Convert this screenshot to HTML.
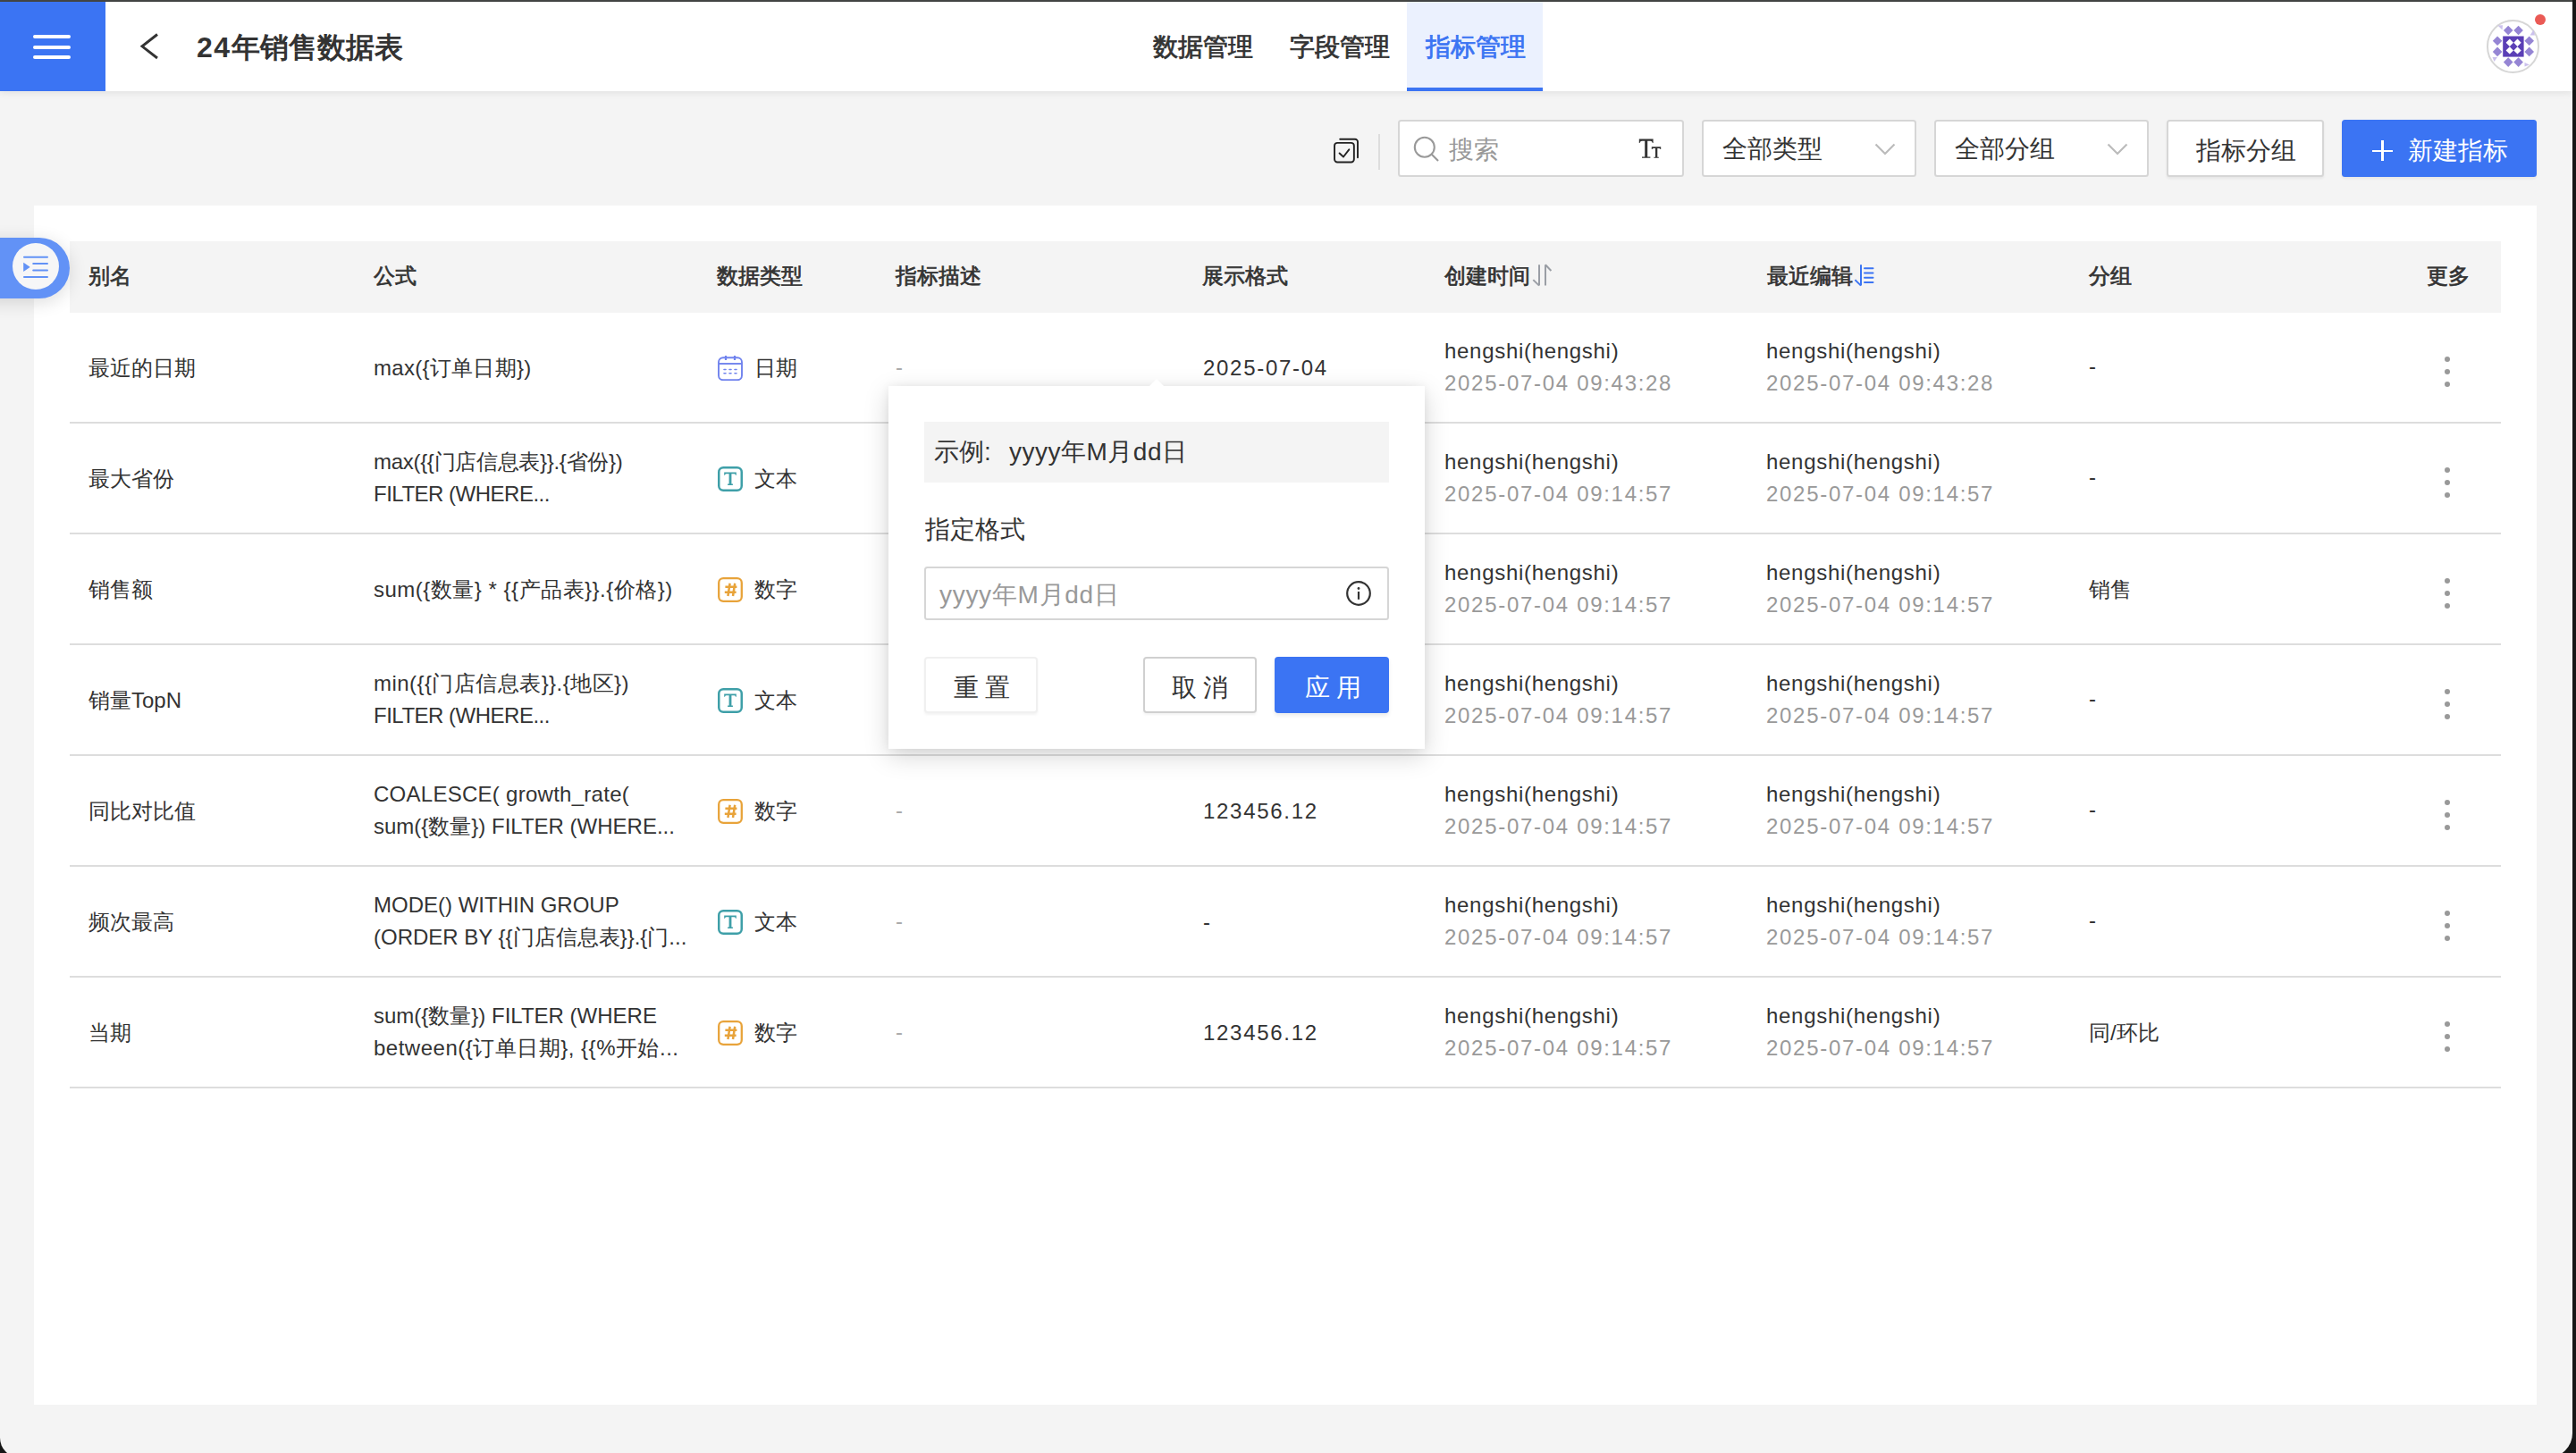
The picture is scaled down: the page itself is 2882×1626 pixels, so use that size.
<!DOCTYPE html><html><head><meta charset="utf-8"><style>
*{box-sizing:border-box}
html,body{margin:0;padding:0}
body{width:2882px;height:1626px;position:relative;overflow:hidden;background:#161616;font-family:"Liberation Sans",sans-serif;color:#333333}
.a{position:absolute}
.t{position:absolute;white-space:nowrap;line-height:1}
.r{position:absolute;white-space:nowrap;line-height:36px;font-size:24px}
</style></head><body>
<div class="a" style="left:0;top:0;width:2882px;height:2px;background:#444645"></div>
<div class="a" style="left:0;top:2px;width:2878px;height:1629px;background:#f4f4f4;border-bottom-left-radius:22px;border-bottom-right-radius:27px;overflow:hidden"></div>
<div class="a" style="left:0;top:2px;width:2878px;height:100px;background:#fff;box-shadow:0 2px 8px rgba(0,0,0,0.08)"></div>
<div class="a" style="left:0;top:2px;width:118px;height:100px;background:#3b74f3"></div>
<div class="a" style="left:37px;top:39px;width:42px;height:4px;border-radius:2px;background:#fff"></div>
<div class="a" style="left:37px;top:50.5px;width:42px;height:4px;border-radius:2px;background:#fff"></div>
<div class="a" style="left:37px;top:62px;width:42px;height:4px;border-radius:2px;background:#fff"></div>
<svg class="a" style="left:150px;top:30px" width="40" height="44" viewBox="0 0 40 44"><path d="M26 8.5 L9 21.8 L26 35" fill="none" stroke="#333333" stroke-width="2.9"/></svg>
<div class="t" style="left:220px;top:37px;font-size:32px;font-weight:bold"><span style="letter-spacing:1.5px">24</span>年销售数据表</div>
<div class="a" style="left:1574px;top:2px;width:152px;height:100px;background:#ebf1fe"></div>
<div class="a" style="left:1574px;top:98px;width:152px;height:4px;background:#3b74f3"></div>
<div class="t" style="left:1290px;top:39px;font-size:28px;-webkit-text-stroke:0.8px #333">数据管理</div>
<div class="t" style="left:1443px;top:39px;font-size:28px;-webkit-text-stroke:0.8px #333">字段管理</div>
<div class="t" style="left:1595px;top:39px;font-size:28px;-webkit-text-stroke:0.8px #3b74f3;color:#3b74f3">指标管理</div>
<div class="a" style="left:2782px;top:22.2px;width:59.4px;height:59.4px;border-radius:50%;border:2px solid #d6d6d6;background:#fff"></div>
<svg class="a" style="left:2782px;top:22px" width="60" height="60" viewBox="0 0 60 60">
<g fill="#9585d4">
<path d="M24.2 6.7 l5.3 5.3 -5.3 5.3 -5.3 -5.3z"/><path d="M35.6 6.7 l5.3 5.3 -5.3 5.3 -5.3 -5.3z"/>
<path d="M24.2 42.3 l5.3 5.3 -5.3 5.3 -5.3 -5.3z"/><path d="M35.6 42.3 l5.3 5.3 -5.3 5.3 -5.3 -5.3z"/>
<path d="M12.1 18.5 l5.3 5.3 -5.3 5.3 -5.3 -5.3z"/><path d="M12.1 30.6 l5.3 5.3 -5.3 5.3 -5.3 -5.3z"/>
<path d="M47.7 18.5 l5.3 5.3 -5.3 5.3 -5.3 -5.3z"/><path d="M47.7 30.6 l5.3 5.3 -5.3 5.3 -5.3 -5.3z"/>
</g>
<g fill="#cbc1ec"><path d="M12.5 6.5 L18 6.2 L17.5 11.5z"/><path d="M52.5 11.5 L54 17.5 L48.5 17.5z"/><path d="M6.5 42 L12 42 L8.5 47z"/><path d="M42.5 48 L48 50.5 L42.5 52.5z"/></g>
<rect x="18.2" y="18.5" width="23.4" height="23.1" fill="#5b3fb6"/>
<g fill="#fff"><path d="M25.8 21.5 l4.2 4.2 -4.2 4.2 -4.2 -4.2z"/><path d="M34.5 21.5 l4.2 4.2 -4.2 4.2 -4.2 -4.2z"/><path d="M25.8 30.2 l4.2 4.2 -4.2 4.2 -4.2 -4.2z"/><path d="M34.5 30.2 l4.2 4.2 -4.2 4.2 -4.2 -4.2z"/></g>
</svg>
<div class="a" style="left:2836px;top:16px;width:12px;height:12px;border-radius:50%;background:#ea5a55"></div>
<svg class="a" style="left:1488px;top:150px" width="36" height="36" viewBox="0 0 36 36" fill="none" stroke="#222" stroke-width="1.9" stroke-linecap="round" stroke-linejoin="round">
<rect x="5.05" y="9.85" width="21.8" height="21.7" rx="3.2"/>
<path d="M11.2 5.7 H28 a3 3 0 0 1 3 3 V26.3"/>
<path d="M10.6 21.5 L15 25.5 L21.3 17.3"/></svg>
<div class="a" style="left:1542px;top:150px;width:2px;height:40px;background:#dddddd"></div>
<div class="a" style="left:1564px;top:134px;width:320px;height:64px;background:#fff;border:2px solid #d6d6d6;border-radius:3.5px;"></div>
<svg class="a" style="left:1578px;top:149px" width="36" height="36" viewBox="0 0 36 36" fill="none" stroke="#999999" stroke-width="2.1"><circle cx="15.8" cy="15.7" r="11"/><path d="M23.5 23.5 L31 31"/></svg>
<div class="t" style="left:1621px;top:154px;font-size:28px;color:#999999">搜索</div>
<svg class="a" style="left:1830px;top:150px" width="32" height="32" viewBox="0 0 32 32" fill="#333">
<path d="M3.8 5.6 H19.6 V10 l-0.7 0 Q18.2 7.8 16.4 7.8 H13.2 V25.6 H16.4 V26.8 H7 V25.6 H10.2 V7.8 H7 Q5.2 7.8 4.5 10 l-0.7 0z"/>
<path d="M17.8 14.3 H28.2 V17 l-0.6 0 Q27.2 15.9 26 15.9 H24.3 V25.8 H25.8 V26.8 H20.4 V25.8 H22 V15.9 H20 Q18.8 15.9 18.4 17 l-0.6 0z"/>
</svg>
<div class="a" style="left:1904px;top:134px;width:240px;height:64px;background:#fff;border:2px solid #d6d6d6;border-radius:3.5px;"></div>
<div class="t" style="left:1927px;top:153px;font-size:28px">全部类型</div>
<svg class="a" style="left:2096px;top:158px" width="26" height="18" viewBox="0 0 26 18" fill="none" stroke="#bbbbbb" stroke-width="2.2"><path d="M2.5 3.5 L13 14 L23.5 3.5"/></svg>
<div class="a" style="left:2164px;top:134px;width:240px;height:64px;background:#fff;border:2px solid #d6d6d6;border-radius:3.5px;"></div>
<div class="t" style="left:2187px;top:153px;font-size:28px">全部分组</div>
<svg class="a" style="left:2356px;top:158px" width="26" height="18" viewBox="0 0 26 18" fill="none" stroke="#bbbbbb" stroke-width="2.2"><path d="M2.5 3.5 L13 14 L23.5 3.5"/></svg>
<div class="a" style="left:2424px;top:134px;width:176px;height:64px;background:#fff;border:2px solid #d6d6d6;border-radius:3.5px;box-shadow:0 2px 3px rgba(0,0,0,0.06)"></div>
<div class="t" style="left:2457px;top:155px;font-size:28px">指标分组</div>
<div class="a" style="left:2620px;top:134px;width:218px;height:64px;background:#3b74f3;border-radius:3.5px;box-shadow:0 2px 3px rgba(0,0,0,0.06)"></div>
<div class="a" style="left:2654px;top:167.5px;width:23px;height:2.4px;background:#fff"></div>
<div class="a" style="left:2664.3px;top:157px;width:2.4px;height:23px;background:#fff"></div>
<div class="t" style="left:2694px;top:155px;font-size:28px;color:#fff">新建指标</div>
<div class="a" style="left:38px;top:230px;width:2800px;height:1342px;background:#fff"></div>
<div class="a" style="left:78px;top:270px;width:2720px;height:80px;background:#f4f4f4"></div>
<div class="t" style="left:99px;top:297px;font-size:24px;-webkit-text-stroke:0.7px #333333">别名</div>
<div class="t" style="left:418px;top:297px;font-size:24px;-webkit-text-stroke:0.7px #333333">公式</div>
<div class="t" style="left:802px;top:297px;font-size:24px;-webkit-text-stroke:0.7px #333333">数据类型</div>
<div class="t" style="left:1002px;top:297px;font-size:24px;-webkit-text-stroke:0.7px #333333">指标描述</div>
<div class="t" style="left:1344.5px;top:297px;font-size:24px;-webkit-text-stroke:0.7px #333333">展示格式</div>
<div class="t" style="left:1616px;top:297px;font-size:24px;-webkit-text-stroke:0.7px #333333">创建时间</div>
<div class="t" style="left:1976.5px;top:297px;font-size:24px;-webkit-text-stroke:0.7px #333333">最近编辑</div>
<div class="t" style="left:2336.5px;top:297px;font-size:24px;-webkit-text-stroke:0.7px #333333">分组</div>
<div class="t" style="left:2715px;top:297px;font-size:24px;-webkit-text-stroke:0.7px #333333">更多</div>
<svg class="a" style="left:1710px;top:292px" width="30" height="32" viewBox="0 0 30 32" fill="none" stroke="#9a9ea5" stroke-width="2"><path d="M12 4.2 V27.6 M5.3 21.1 L12 27.6 M19 27.6 V4.2 M19 4.2 L25.4 11"/></svg>
<svg class="a" style="left:2070px;top:292px" width="30" height="32" viewBox="0 0 30 32" fill="none" stroke="#3b74f3" stroke-width="2"><path d="M12 4.2 V27.6 M5.4 21.1 L12 27.6"/><path d="M16 8.3 H25.5 M16 13.6 H25.5 M16 18.8 H25.5 M16 24 H25.5" stroke-linecap="round"/></svg>
<div class="a" style="left:78px;top:472px;width:2720px;height:2px;background:#dddddd"></div>
<div class="r" style="left:99px;top:394px">最近的日期</div>
<div class="r" style="left:418px;top:394px"><span style="letter-spacing:0.3px">max({订单日期})</span></div>
<svg class="a" style="left:803px;top:398px" width="28" height="28" viewBox="0 0 28 28" fill="none" stroke="#7083ee" stroke-width="1.9">
<rect x="1" y="2.2" width="26" height="25" rx="5"/><path d="M1 9 H27"/><path d="M9 0 V5 M19 0 V5" stroke-width="2.2"/>
<g stroke-width="1.6" stroke-linecap="round"><path d="M7 15.5 h2 M13 15.5 h2 M19 15.5 h2 M7 19.7 h2 M13 19.7 h2 M19 19.7 h2"/></g></svg>
<div class="r" style="left:844px;top:394px">日期</div>
<div class="r" style="left:1002px;top:393px;color:#aaaaaa">-</div>
<div class="r" style="left:1346px;top:394px;letter-spacing:1.7px">2025-07-04</div>
<div class="r" style="left:1616px;top:375px"><span style="letter-spacing:0.7px">hengshi(hengshi)</span><br><span style="color:#999999;letter-spacing:1.7px">2025-07-04 09:43:28</span></div>
<div class="r" style="left:1976px;top:375px"><span style="letter-spacing:0.7px">hengshi(hengshi)</span><br><span style="color:#999999;letter-spacing:1.7px">2025-07-04 09:43:28</span></div>
<div class="r" style="left:2337px;top:392px">-</div>
<div class="a" style="left:2735px;top:399px;width:6px;height:6px;border-radius:50%;background:#999"></div>
<div class="a" style="left:2735px;top:413px;width:6px;height:6px;border-radius:50%;background:#999"></div>
<div class="a" style="left:2735px;top:426.6px;width:6px;height:6px;border-radius:50%;background:#999"></div>
<div class="a" style="left:78px;top:596px;width:2720px;height:2px;background:#dddddd"></div>
<div class="r" style="left:99px;top:518px">最大省份</div>
<div class="r" style="left:418px;top:499px"><span style="letter-spacing:-0.3px">max({{门店信息表}}.{省份})</span><br><span style="letter-spacing:-0.5px">FILTER (WHERE...</span></div>
<svg class="a" style="left:803px;top:522px" width="28" height="28" viewBox="0 0 28 28" fill="none">
<rect x="1.25" y="1.25" width="25.5" height="25.5" rx="5" stroke="#3e9fa8" stroke-width="2.5"/>
<path d="M7.2 6.6 H20.8 V9.7 H20 Q19.6 8.3 18.4 8.3 H15.4 V19.6 H16.9 V21 H11.1 V19.6 H12.6 V8.3 H9.6 Q8.4 8.3 8 9.7 H7.2z" fill="#3e9fa8"/></svg>
<div class="r" style="left:844px;top:518px">文本</div>
<div class="r" style="left:1002px;top:517px;color:#aaaaaa">-</div>
<div class="r" style="left:1346px;top:518px;letter-spacing:1.7px">-</div>
<div class="r" style="left:1616px;top:499px"><span style="letter-spacing:0.7px">hengshi(hengshi)</span><br><span style="color:#999999;letter-spacing:1.7px">2025-07-04 09:14:57</span></div>
<div class="r" style="left:1976px;top:499px"><span style="letter-spacing:0.7px">hengshi(hengshi)</span><br><span style="color:#999999;letter-spacing:1.7px">2025-07-04 09:14:57</span></div>
<div class="r" style="left:2337px;top:516px">-</div>
<div class="a" style="left:2735px;top:523px;width:6px;height:6px;border-radius:50%;background:#999"></div>
<div class="a" style="left:2735px;top:537px;width:6px;height:6px;border-radius:50%;background:#999"></div>
<div class="a" style="left:2735px;top:550.6px;width:6px;height:6px;border-radius:50%;background:#999"></div>
<div class="a" style="left:78px;top:720px;width:2720px;height:2px;background:#dddddd"></div>
<div class="r" style="left:99px;top:642px">销售额</div>
<div class="r" style="left:418px;top:642px"><span style="letter-spacing:0.5px">sum({数量} * {{产品表}}.{价格})</span></div>
<svg class="a" style="left:803px;top:646px" width="28" height="28" viewBox="0 0 28 28" fill="none">
<rect x="1.2" y="1.2" width="25.6" height="25.6" rx="5" stroke="#e8a33a" stroke-width="2.3"/>
<path d="M13.6 6.8 L11.4 21 M19.2 6.8 L17 21 M8.4 10.8 H21.4 M7.8 16.8 H20.6" stroke="#e8a33a" stroke-width="2.5"/></svg>
<div class="r" style="left:844px;top:642px">数字</div>
<div class="r" style="left:1002px;top:641px;color:#aaaaaa">-</div>
<div class="r" style="left:1346px;top:642px;letter-spacing:1.7px">123456.12</div>
<div class="r" style="left:1616px;top:623px"><span style="letter-spacing:0.7px">hengshi(hengshi)</span><br><span style="color:#999999;letter-spacing:1.7px">2025-07-04 09:14:57</span></div>
<div class="r" style="left:1976px;top:623px"><span style="letter-spacing:0.7px">hengshi(hengshi)</span><br><span style="color:#999999;letter-spacing:1.7px">2025-07-04 09:14:57</span></div>
<div class="r" style="left:2337px;top:642px">销售</div>
<div class="a" style="left:2735px;top:647px;width:6px;height:6px;border-radius:50%;background:#999"></div>
<div class="a" style="left:2735px;top:661px;width:6px;height:6px;border-radius:50%;background:#999"></div>
<div class="a" style="left:2735px;top:674.6px;width:6px;height:6px;border-radius:50%;background:#999"></div>
<div class="a" style="left:78px;top:844px;width:2720px;height:2px;background:#dddddd"></div>
<div class="r" style="left:99px;top:766px">销量TopN</div>
<div class="r" style="left:418px;top:747px"><span style="letter-spacing:0.45px">min({{门店信息表}}.{地区})</span><br><span style="letter-spacing:-0.5px">FILTER (WHERE...</span></div>
<svg class="a" style="left:803px;top:770px" width="28" height="28" viewBox="0 0 28 28" fill="none">
<rect x="1.25" y="1.25" width="25.5" height="25.5" rx="5" stroke="#3e9fa8" stroke-width="2.5"/>
<path d="M7.2 6.6 H20.8 V9.7 H20 Q19.6 8.3 18.4 8.3 H15.4 V19.6 H16.9 V21 H11.1 V19.6 H12.6 V8.3 H9.6 Q8.4 8.3 8 9.7 H7.2z" fill="#3e9fa8"/></svg>
<div class="r" style="left:844px;top:766px">文本</div>
<div class="r" style="left:1002px;top:765px;color:#aaaaaa">-</div>
<div class="r" style="left:1346px;top:766px;letter-spacing:1.7px">-</div>
<div class="r" style="left:1616px;top:747px"><span style="letter-spacing:0.7px">hengshi(hengshi)</span><br><span style="color:#999999;letter-spacing:1.7px">2025-07-04 09:14:57</span></div>
<div class="r" style="left:1976px;top:747px"><span style="letter-spacing:0.7px">hengshi(hengshi)</span><br><span style="color:#999999;letter-spacing:1.7px">2025-07-04 09:14:57</span></div>
<div class="r" style="left:2337px;top:764px">-</div>
<div class="a" style="left:2735px;top:771px;width:6px;height:6px;border-radius:50%;background:#999"></div>
<div class="a" style="left:2735px;top:785px;width:6px;height:6px;border-radius:50%;background:#999"></div>
<div class="a" style="left:2735px;top:798.6px;width:6px;height:6px;border-radius:50%;background:#999"></div>
<div class="a" style="left:78px;top:968px;width:2720px;height:2px;background:#dddddd"></div>
<div class="r" style="left:99px;top:890px">同比对比值</div>
<div class="r" style="left:418px;top:871px"><span style="letter-spacing:0.27px">COALESCE( growth_rate(</span><br><span style="letter-spacing:0px">sum({数量}) FILTER (WHERE...</span></div>
<svg class="a" style="left:803px;top:894px" width="28" height="28" viewBox="0 0 28 28" fill="none">
<rect x="1.2" y="1.2" width="25.6" height="25.6" rx="5" stroke="#e8a33a" stroke-width="2.3"/>
<path d="M13.6 6.8 L11.4 21 M19.2 6.8 L17 21 M8.4 10.8 H21.4 M7.8 16.8 H20.6" stroke="#e8a33a" stroke-width="2.5"/></svg>
<div class="r" style="left:844px;top:890px">数字</div>
<div class="r" style="left:1002px;top:889px;color:#aaaaaa">-</div>
<div class="r" style="left:1346px;top:890px;letter-spacing:1.7px">123456.12</div>
<div class="r" style="left:1616px;top:871px"><span style="letter-spacing:0.7px">hengshi(hengshi)</span><br><span style="color:#999999;letter-spacing:1.7px">2025-07-04 09:14:57</span></div>
<div class="r" style="left:1976px;top:871px"><span style="letter-spacing:0.7px">hengshi(hengshi)</span><br><span style="color:#999999;letter-spacing:1.7px">2025-07-04 09:14:57</span></div>
<div class="r" style="left:2337px;top:888px">-</div>
<div class="a" style="left:2735px;top:895px;width:6px;height:6px;border-radius:50%;background:#999"></div>
<div class="a" style="left:2735px;top:909px;width:6px;height:6px;border-radius:50%;background:#999"></div>
<div class="a" style="left:2735px;top:922.6px;width:6px;height:6px;border-radius:50%;background:#999"></div>
<div class="a" style="left:78px;top:1092px;width:2720px;height:2px;background:#dddddd"></div>
<div class="r" style="left:99px;top:1014px">频次最高</div>
<div class="r" style="left:418px;top:995px"><span style="letter-spacing:0px">MODE() WITHIN GROUP</span><br><span style="letter-spacing:0px">(ORDER BY {{门店信息表}}.{门...</span></div>
<svg class="a" style="left:803px;top:1018px" width="28" height="28" viewBox="0 0 28 28" fill="none">
<rect x="1.25" y="1.25" width="25.5" height="25.5" rx="5" stroke="#3e9fa8" stroke-width="2.5"/>
<path d="M7.2 6.6 H20.8 V9.7 H20 Q19.6 8.3 18.4 8.3 H15.4 V19.6 H16.9 V21 H11.1 V19.6 H12.6 V8.3 H9.6 Q8.4 8.3 8 9.7 H7.2z" fill="#3e9fa8"/></svg>
<div class="r" style="left:844px;top:1014px">文本</div>
<div class="r" style="left:1002px;top:1013px;color:#aaaaaa">-</div>
<div class="r" style="left:1346px;top:1014px;letter-spacing:1.7px">-</div>
<div class="r" style="left:1616px;top:995px"><span style="letter-spacing:0.7px">hengshi(hengshi)</span><br><span style="color:#999999;letter-spacing:1.7px">2025-07-04 09:14:57</span></div>
<div class="r" style="left:1976px;top:995px"><span style="letter-spacing:0.7px">hengshi(hengshi)</span><br><span style="color:#999999;letter-spacing:1.7px">2025-07-04 09:14:57</span></div>
<div class="r" style="left:2337px;top:1012px">-</div>
<div class="a" style="left:2735px;top:1019px;width:6px;height:6px;border-radius:50%;background:#999"></div>
<div class="a" style="left:2735px;top:1033px;width:6px;height:6px;border-radius:50%;background:#999"></div>
<div class="a" style="left:2735px;top:1046.6px;width:6px;height:6px;border-radius:50%;background:#999"></div>
<div class="a" style="left:78px;top:1216px;width:2720px;height:2px;background:#dddddd"></div>
<div class="r" style="left:99px;top:1138px">当期</div>
<div class="r" style="left:418px;top:1119px"><span style="letter-spacing:0px">sum({数量}) FILTER (WHERE</span><br><span style="letter-spacing:0.5px">between({订单日期}, {{%开始...</span></div>
<svg class="a" style="left:803px;top:1142px" width="28" height="28" viewBox="0 0 28 28" fill="none">
<rect x="1.2" y="1.2" width="25.6" height="25.6" rx="5" stroke="#e8a33a" stroke-width="2.3"/>
<path d="M13.6 6.8 L11.4 21 M19.2 6.8 L17 21 M8.4 10.8 H21.4 M7.8 16.8 H20.6" stroke="#e8a33a" stroke-width="2.5"/></svg>
<div class="r" style="left:844px;top:1138px">数字</div>
<div class="r" style="left:1002px;top:1137px;color:#aaaaaa">-</div>
<div class="r" style="left:1346px;top:1138px;letter-spacing:1.7px">123456.12</div>
<div class="r" style="left:1616px;top:1119px"><span style="letter-spacing:0.7px">hengshi(hengshi)</span><br><span style="color:#999999;letter-spacing:1.7px">2025-07-04 09:14:57</span></div>
<div class="r" style="left:1976px;top:1119px"><span style="letter-spacing:0.7px">hengshi(hengshi)</span><br><span style="color:#999999;letter-spacing:1.7px">2025-07-04 09:14:57</span></div>
<div class="r" style="left:2337px;top:1138px">同/环比</div>
<div class="a" style="left:2735px;top:1143px;width:6px;height:6px;border-radius:50%;background:#999"></div>
<div class="a" style="left:2735px;top:1157px;width:6px;height:6px;border-radius:50%;background:#999"></div>
<div class="a" style="left:2735px;top:1170.6px;width:6px;height:6px;border-radius:50%;background:#999"></div>
<div class="a" style="left:-20px;top:266px;width:98px;height:68px;border-radius:0 34px 34px 0;background:#6292f6;box-shadow:0 4px 20px rgba(0,0,0,0.14)"></div>
<div class="a" style="left:14px;top:272px;width:52px;height:52px;border-radius:50%;background:#f6f6f7"></div>
<svg class="a" style="left:14px;top:272px" width="52" height="52" viewBox="0 0 52 52" fill="none" stroke="#6292f6" stroke-width="2" stroke-linecap="round"><path d="M13 15.7 H39 M23.2 23.1 H39 M23.2 30.6 H39 M13 37.9 H39"/><path d="M12.2 22.2 Q12 21.6 12.6 21.9 L19.2 26.4 Q19.7 26.8 19.2 27.2 L12.6 31.7 Q12 32 12.2 31.4z" fill="#6292f6" stroke="none"/></svg>
<div class="a" style="left:994px;top:432px;width:600px;height:406px;background:#fff;box-shadow:0 8px 26px rgba(0,0,0,0.17), 0 0 10px rgba(0,0,0,0.05)"></div>
<svg class="a" style="left:1284px;top:423px" width="20" height="10" viewBox="0 0 20 10"><path d="M1 10 L10 1 L19 10z" fill="#fff"/></svg>
<div class="a" style="left:1034px;top:472px;width:520px;height:68px;background:#f4f4f4"></div>
<div class="t" style="left:1045px;top:492px;font-size:28px">示例<span style="display:inline-block;width:28px">:</span><span style="letter-spacing:0.5px">yyyy年M月dd日</span></div>
<div class="t" style="left:1035px;top:579px;font-size:28px">指定格式</div>
<div class="a" style="left:1034px;top:634px;width:520px;height:60px;border:2px solid #d6d6d6;border-radius:3.5px;background:#fff"></div>
<div class="t" style="left:1051px;top:652px;font-size:28px;color:#999999;letter-spacing:0.7px">yyyy年M月dd日</div>
<svg class="a" style="left:1504px;top:648px" width="32" height="32" viewBox="0 0 32 32" fill="none" stroke="#333333" stroke-width="2.2"><circle cx="16" cy="16" r="12.8"/><path d="M16 14 V22.8"/><circle cx="16" cy="10.5" r="1.4" fill="#333333" stroke="none"/></svg>
<div class="a" style="left:1034px;top:735px;width:127px;height:63px;border:2px solid #f0f0f0;border-radius:4px;background:#fff;box-shadow:0 2px 3px rgba(0,0,0,0.05)"></div>
<div class="t" style="left:1067px;top:756px;font-size:28px;letter-spacing:7px">重置</div>
<div class="a" style="left:1279px;top:735px;width:127px;height:63px;border:2px solid #d0d0d0;border-radius:4px;background:#fff;box-shadow:0 2px 3px rgba(0,0,0,0.05)"></div>
<div class="t" style="left:1311px;top:756px;font-size:28px;letter-spacing:7px">取消</div>
<div class="a" style="left:1426px;top:735px;width:128px;height:63px;border-radius:4px;background:#3b74f3;box-shadow:0 3px 4px rgba(0,0,0,0.08)"></div>
<div class="t" style="left:1460px;top:756px;font-size:28px;letter-spacing:7px;color:#fff">应用</div>
<div class="a" style="left:2878px;top:0;width:4px;height:1626px;background:#161616"></div>
</body></html>
